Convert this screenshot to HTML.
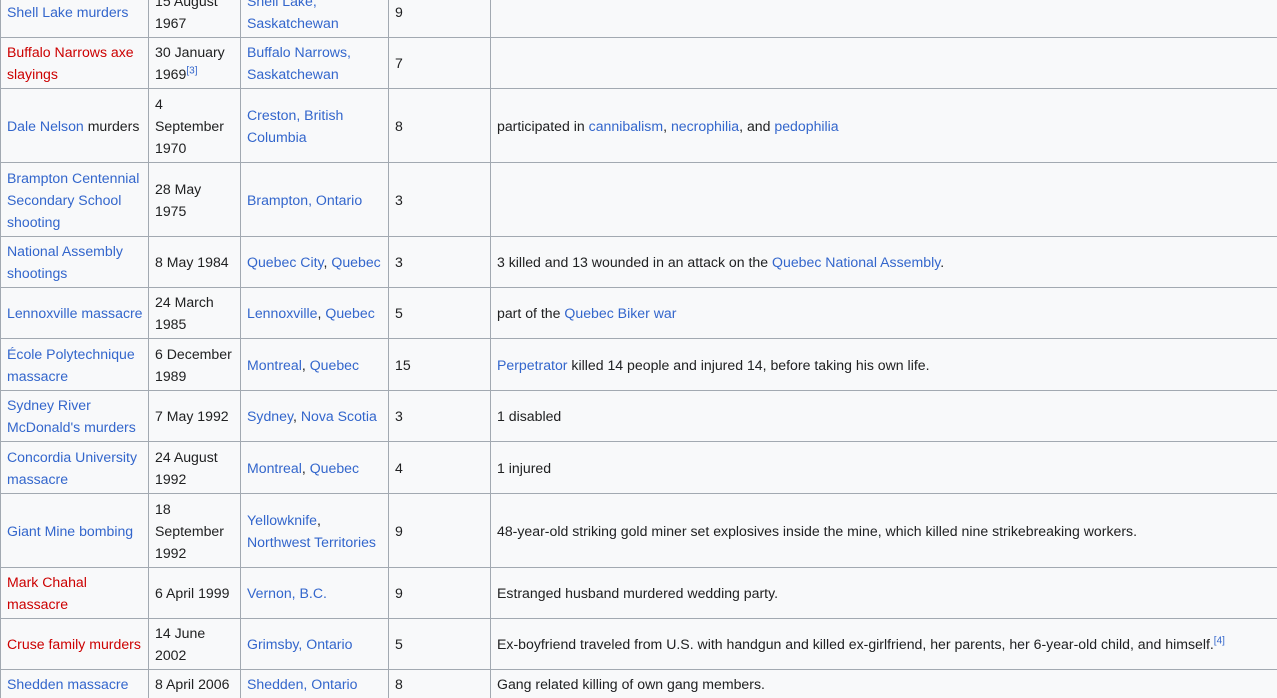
<!DOCTYPE html>
<html><head><meta charset="utf-8"><style>
html,body{margin:0;height:698px;overflow:hidden}
body{background:#fff;font-family:"Liberation Sans",Arial,sans-serif;font-size:14.1px;color:#202122;width:1277px;position:relative}
.r{position:absolute;left:0;width:1290px;border-top:1px solid #a2a9b1;background:#f8f9fa}
.c{position:absolute;top:0;bottom:0;display:flex;align-items:center;padding-left:6px;line-height:22px;box-sizing:border-box;border-left:1px solid #a2a9b1}
.c1{left:0;width:148px}.c2{left:148px;width:92px}.c3{left:240px;width:148px}.c4{left:388px;width:102px}.c5{left:490px;width:800px}
a{color:#3366cc;text-decoration:none}a.n{color:#cc0000}
sup{font-size:10px;line-height:0;vertical-align:super}
</style></head><body>
<div class="r" style="top:-14px;height:50px"><div class="c c1"><div><a>Shell Lake murders</a></div></div><div class="c c2"><div>15 August<br>1967</div></div><div class="c c3"><div><a>Shell Lake,<br>Saskatchewan</a></div></div><div class="c c4">9</div><div class="c c5"></div></div>
<div class="r" style="top:37px;height:50px"><div class="c c1"><div><a class="n">Buffalo Narrows axe slayings</a></div></div><div class="c c2"><div>30 January<br>1969<sup><a>[3]</a></sup></div></div><div class="c c3"><div><a>Buffalo Narrows,<br>Saskatchewan</a></div></div><div class="c c4">7</div><div class="c c5"></div></div>
<div class="r" style="top:88px;height:73px"><div class="c c1"><div><a>Dale Nelson</a> murders</div></div><div class="c c2"><div>4<br>September<br>1970</div></div><div class="c c3"><div><a>Creston, British<br>Columbia</a></div></div><div class="c c4">8</div><div class="c c5"><div>participated in <a>cannibalism</a>, <a>necrophilia</a>, and <a>pedophilia</a></div></div></div>
<div class="r" style="top:162px;height:73px"><div class="c c1"><div><a>Brampton Centennial Secondary School shooting</a></div></div><div class="c c2"><div>28 May<br>1975</div></div><div class="c c3"><div><a>Brampton, Ontario</a></div></div><div class="c c4">3</div><div class="c c5"></div></div>
<div class="r" style="top:236px;height:50px"><div class="c c1"><div><a>National Assembly shootings</a></div></div><div class="c c2"><div>8 May 1984</div></div><div class="c c3"><div><a>Quebec City</a>, <a>Quebec</a></div></div><div class="c c4">3</div><div class="c c5"><div>3 killed and 13 wounded in an attack on the <a>Quebec National Assembly</a>.</div></div></div>
<div class="r" style="top:287px;height:50px"><div class="c c1"><div><a>Lennoxville massacre</a></div></div><div class="c c2"><div>24 March<br>1985</div></div><div class="c c3"><div><a>Lennoxville</a>, <a>Quebec</a></div></div><div class="c c4">5</div><div class="c c5"><div>part of the <a>Quebec Biker war</a></div></div></div>
<div class="r" style="top:338px;height:51px"><div class="c c1"><div><a>École Polytechnique massacre</a></div></div><div class="c c2"><div>6 December<br>1989</div></div><div class="c c3"><div><a>Montreal</a>, <a>Quebec</a></div></div><div class="c c4">15</div><div class="c c5"><div><a>Perpetrator</a> killed 14 people and injured 14, before taking his own life.</div></div></div>
<div class="r" style="top:390px;height:50px"><div class="c c1"><div><a>Sydney River McDonald's murders</a></div></div><div class="c c2"><div>7 May 1992</div></div><div class="c c3"><div><a>Sydney</a>, <a>Nova Scotia</a></div></div><div class="c c4">3</div><div class="c c5"><div>1 disabled</div></div></div>
<div class="r" style="top:441px;height:51px"><div class="c c1"><div><a>Concordia University massacre</a></div></div><div class="c c2"><div>24 August<br>1992</div></div><div class="c c3"><div><a>Montreal</a>, <a>Quebec</a></div></div><div class="c c4">4</div><div class="c c5"><div>1 injured</div></div></div>
<div class="r" style="top:493px;height:73px"><div class="c c1"><div><a>Giant Mine bombing</a></div></div><div class="c c2"><div>18<br>September<br>1992</div></div><div class="c c3"><div><a>Yellowknife</a>,<br><a>Northwest Territories</a></div></div><div class="c c4">9</div><div class="c c5"><div>48-year-old striking gold miner set explosives inside the mine, which killed nine strikebreaking workers.</div></div></div>
<div class="r" style="top:567px;height:50px"><div class="c c1"><div><a class="n">Mark Chahal<br>massacre</a></div></div><div class="c c2"><div>6 April 1999</div></div><div class="c c3"><div><a>Vernon, B.C.</a></div></div><div class="c c4">9</div><div class="c c5"><div>Estranged husband murdered wedding party.</div></div></div>
<div class="r" style="top:618px;height:50px"><div class="c c1"><div><a class="n">Cruse family murders</a></div></div><div class="c c2"><div>14 June<br>2002</div></div><div class="c c3"><div><a>Grimsby, Ontario</a></div></div><div class="c c4">5</div><div class="c c5"><div>Ex-boyfriend traveled from U.S. with handgun and killed ex-girlfriend, her parents, her 6-year-old child, and himself.<sup><a>[4]</a></sup></div></div></div>
<div class="r" style="top:669px;height:50px"><div class="c c1" style="align-items:flex-start;padding-top:3px"><div><a>Shedden massacre</a></div></div><div class="c c2" style="align-items:flex-start;padding-top:3px"><div>8 April 2006</div></div><div class="c c3" style="align-items:flex-start;padding-top:3px"><div><a>Shedden, Ontario</a></div></div><div class="c c4" style="align-items:flex-start;padding-top:3px">8</div><div class="c c5" style="align-items:flex-start;padding-top:3px"><div>Gang related killing of own gang members.</div></div></div>
</body></html>
